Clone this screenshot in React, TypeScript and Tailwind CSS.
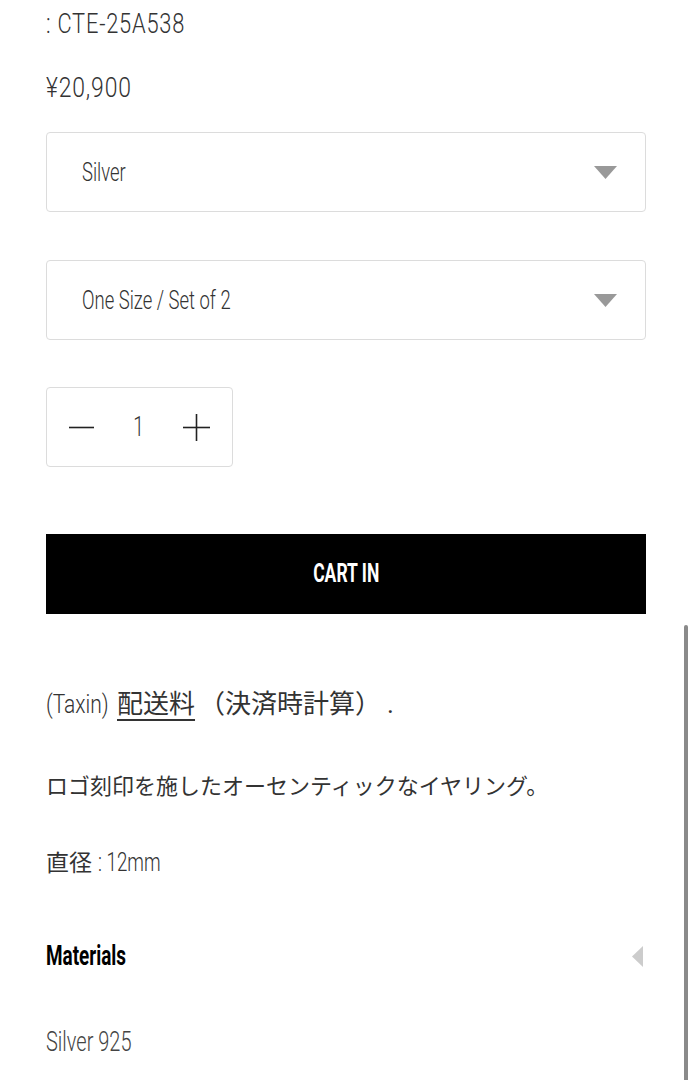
import React from "react";

const latin = "font-['Roboto','Noto_Sans_CJK_JP',sans-serif]";

// Roboto squeezed sideways to stand in for the condensed face of the shop
const Cond = ({ className, children }: { className: string; children: React.ReactNode }) => (
  <span className={`inline-block whitespace-nowrap origin-left ${className}`}>{children}</span>
);

const SelectBox = ({ label }: { label: string }) => (
  <div className="flex h-[80px] items-center justify-between rounded-[4px] border border-[#dcdcdc] pl-[35px] pr-[28px]">
    <Cond className="scale-x-[0.71] text-[26px] font-light text-[#333]">{label}</Cond>
    <svg width="23" height="13" viewBox="0 0 23 13">
      <polygon points="0,0 23,0 11.5,13" fill="#999" />
    </svg>
  </div>
);

export default function App() {
  return (
    <div className={`relative min-h-[1080px] bg-white pl-[46px] pr-[47px] ${latin}`}>
      <p className="pt-[6px] text-[28px] leading-[36px] text-[#333]">
        <Cond className="scale-x-[0.78] font-light tracking-[1px]">: CTE-25A538</Cond>
      </p>
      <p className="mt-[28px] text-[27px] leading-[36px] text-[#333]">
        <Cond className="scale-x-[0.85] font-light tracking-[1px]">¥20,900</Cond>
      </p>

      <div className="mt-[26px] flex flex-col gap-[48px]">
        <SelectBox label="Silver" />
        <SelectBox label="One Size / Set of 2" />
      </div>

      <div className="mt-[47px] flex h-[80px] w-[187px] items-center justify-between rounded-[4px] border border-[#dcdcdc] px-[22px]">
        <svg width="25" height="25" viewBox="0 0 25 25">
          <line x1="0" y1="12.5" x2="25" y2="12.5" stroke="#222" strokeWidth="1.6" />
        </svg>
        <span className="inline-block scale-x-[0.71] text-[27px] font-light text-[#333]">1</span>
        <svg width="27" height="27" viewBox="0 0 27 27">
          <line x1="0" y1="13.5" x2="27" y2="13.5" stroke="#222" strokeWidth="1.6" />
          <line x1="13.5" y1="0" x2="13.5" y2="27" stroke="#222" strokeWidth="1.6" />
        </svg>
      </div>

      <button className="mt-[67px] flex h-[80px] w-full items-center justify-center bg-black text-white">
        <span className="inline-block scale-x-[0.7] text-[25px] font-bold">CART IN</span>
      </button>

      <p className="mt-[72px] flex items-baseline whitespace-nowrap text-[26px] leading-[36px] text-[#333]">
        <span className="inline-block w-[71px]">
          <Cond className="scale-x-[0.84] text-[25px] font-light">(Taxin)</Cond>
        </span>
        <span className="underline decoration-[1.5px] underline-offset-[6px]">配送料</span>
        <span className="ml-[4px]">（決済時計算）</span>
        <span className="ml-[6px]">.</span>
      </p>

      <p className="mt-[46px] text-[22px] leading-[36px] text-[#333]">
        ロゴ刻印を施したオーセンティックなイヤリング。
      </p>

      <p className="mt-[40px] flex items-baseline whitespace-nowrap text-[23px] leading-[36px] text-[#333]">
        <span>直径</span>
        <Cond className="ml-[6px] scale-x-[0.75] text-[25px] font-light">: 12mm</Cond>
      </p>

      <div className="mt-[56px] flex items-center justify-between pr-[3px]">
        <Cond className="scale-x-[0.7] text-[27px] font-bold leading-[36px] text-black">Materials</Cond>
        <svg width="11" height="21" viewBox="0 0 11 21">
          <polygon points="11,0 11,21 0,10.5" fill="#ccc" />
        </svg>
      </div>

      <p className="mt-[50px] text-[27px] leading-[36px] text-[#444]">
        <Cond className="scale-x-[0.74] font-light">Silver 925</Cond>
      </p>

      <div className="absolute right-[5px] top-[625px] h-[455px] w-[4px] rounded-t-full bg-[#8a8a8a]" />
    </div>
  );
}
